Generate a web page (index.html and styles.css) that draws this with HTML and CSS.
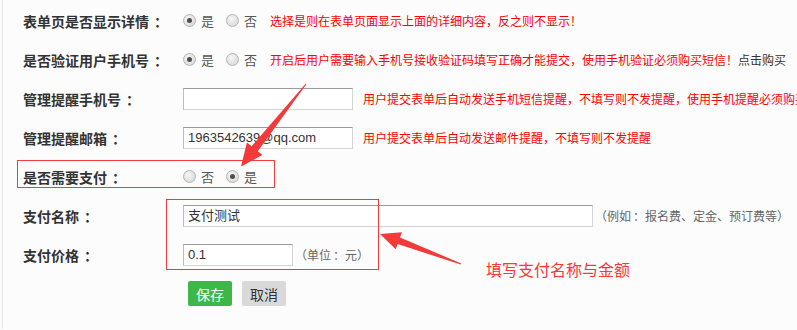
FILE: index.html
```html
<!DOCTYPE html>
<html lang="zh">
<head>
<meta charset="utf-8">
<link rel="stylesheet" href="styles.css">
</head>
<body>
<div class="panel">
  <div class="row">
    <div class="label">表单页是否显示详情<span class="colon">：</span></div>
    <div class="value">
      <span class="opt"><span class="radio checked"></span>是</span>
      <span class="opt"><span class="radio"></span>否</span>
      <span class="hint red">选择是则在表单页面显示上面的详细内容，反之则不显示！</span>
    </div>
  </div>
  <div class="row">
    <div class="label">是否验证用户手机号<span class="colon">：</span></div>
    <div class="value">
      <span class="opt"><span class="radio checked"></span>是</span>
      <span class="opt"><span class="radio"></span>否</span>
      <span class="hint red">开启后用户需要输入手机号接收验证码填写正确才能提交，使用手机验证必须购买短信！<span class="dark">点击购买</span></span>
    </div>
  </div>
  <div class="row">
    <div class="label">管理提醒手机号<span class="colon">：</span></div>
    <div class="value">
      <span class="input w170"></span>
      <span class="hint red ml10">用户提交表单后自动发送手机短信提醒，不填写则不发提醒，使用手机提醒必须购买短信！</span>
    </div>
  </div>
  <div class="row">
    <div class="label">管理提醒邮箱<span class="colon">：</span></div>
    <div class="value">
      <span class="input w170">1963542639@qq.com</span>
      <span class="hint red ml10">用户提交表单后自动发送邮件提醒，不填写则不发提醒</span>
    </div>
  </div>
  <div class="row">
    <div class="label">是否需要支付<span class="colon">：</span></div>
    <div class="value">
      <span class="opt"><span class="radio"></span>否</span>
      <span class="opt"><span class="radio checked"></span>是</span>
    </div>
  </div>
  <div class="row">
    <div class="label">支付名称<span class="colon">：</span></div>
    <div class="value">
      <span class="input w410">支付测试</span>
      <span class="note">（例如<span class="colon small">：</span>报名费、定金、预订费等）</span>
    </div>
  </div>
  <div class="row">
    <div class="label">支付价格<span class="colon">：</span></div>
    <div class="value">
      <span class="input w110">0.1</span>
      <span class="note">（单位<span class="colon small">：</span>元）</span>
    </div>
  </div>
  <div class="actions">
    <span class="btn save">保存</span>
    <span class="btn cancel">取消</span>
  </div>
</div>

<div class="box box-pay"></div>
<div class="box box-fields"></div>
<div class="callout">填写支付名称与金额</div>
<svg class="arrows" width="797" height="330" viewBox="0 0 797 330">
  <polygon fill="#f23a3a" points="306.4,84.3 257.8,151.3 262.5,155 241,166.5 246.9,142.6 251.6,146.3 305.6,83.7"/>
  <polygon fill="#f23a3a" points="461.2,263.5 400,237.5 401.9,232.3 380,234 395.7,249.3 397.6,244.1 460.8,264.5"/>
</svg>
</body>
</html>
```
FILE: styles.css
```css
html, body {
  margin: 0;
  padding: 0;
  background: #fcfcfc;
  width: 797px;
  height: 330px;
  overflow: hidden;
  font-family: "Noto Sans CJK SC", "Noto Sans", sans-serif;
  color: #333;
}
.panel {
  margin-left: 2px;
  border-left: 1px solid #e6e6e6;
  padding: 1px 0 0 20px;
  height: 329px;
  box-sizing: border-box;
}
.row {
  display: flex;
  align-items: center;
  height: 39px;
  white-space: nowrap;
}
.label {
  width: 160px;
  flex: none;
  font-size: 14px;
  font-weight: bold;
  color: #333;
}
.colon {
  padding-left: 5px;
}
.colon.small {
  padding-left: 2px;
}
.value {
  display: flex;
  align-items: center;
  font-size: 13px;
  color: #444;
}
.opt {
  display: inline-flex;
  align-items: center;
  margin-right: 12px;
  font-size: 13px;
  color: #555;
}
.radio {
  width: 11px;
  height: 11px;
  border-radius: 50%;
  border: 1px solid #b3b3b3;
  background: radial-gradient(circle at 40% 35%, #f6f6f6 0%, #dedede 70%, #d0d0d0 100%);
  margin-right: 5px;
  position: relative;
  flex: none;
}
.radio.checked::after {
  content: "";
  position: absolute;
  left: 3px;
  top: 3px;
  width: 5px;
  height: 5px;
  border-radius: 50%;
  background: #4d4d4d;
}
.hint {
  font-size: 12px;
  margin-left: 1px;
}
.red { color: #ff0000; }
.dark { color: #333; }
.ml10 { margin-left: 10px; }
.input {
  display: inline-block;
  box-sizing: border-box;
  height: 22px;
  line-height: 20px;
  border: 1px solid #d4d4d4;
  border-top-color: #9a9a9a;
  border-left-color: #bdbdbd;
  background: #fff;
  padding: 0 4px;
  font-size: 13px;
  color: #333;
  font-family: "Liberation Sans", "Noto Sans CJK SC", sans-serif;
}
.w170 { width: 170px; }
.w410 { width: 410px; }
.w110 { width: 110px; }
.note {
  font-size: 12px;
  color: #666;
  margin-left: 2px;
}
.actions {
  display: flex;
  gap: 10px;
  padding-left: 165px;
  margin-top: 7px;
}
.btn {
  display: inline-flex;
  align-items: center;
  justify-content: center;
  width: 44px;
  height: 25px;
  border-radius: 2px;
  font-size: 14px;
}
.save { background: #3fb64a; color: #fff; }
.cancel { background: #d9d9d9; color: #333; }

.box {
  position: absolute;
  border: 1px solid #f03c3c;
  box-sizing: border-box;
}
.box-pay { left: 17px; top: 160px; width: 258px; height: 28px; }
.box-fields { left: 166px; top: 199px; width: 213px; height: 71px; }
.callout {
  position: absolute;
  left: 486px;
  top: 258px;
  font-size: 16px;
  line-height: 22px;
  color: #ff3636;
}
.arrows {
  position: absolute;
  left: 0;
  top: 0;
  pointer-events: none;
}
```
